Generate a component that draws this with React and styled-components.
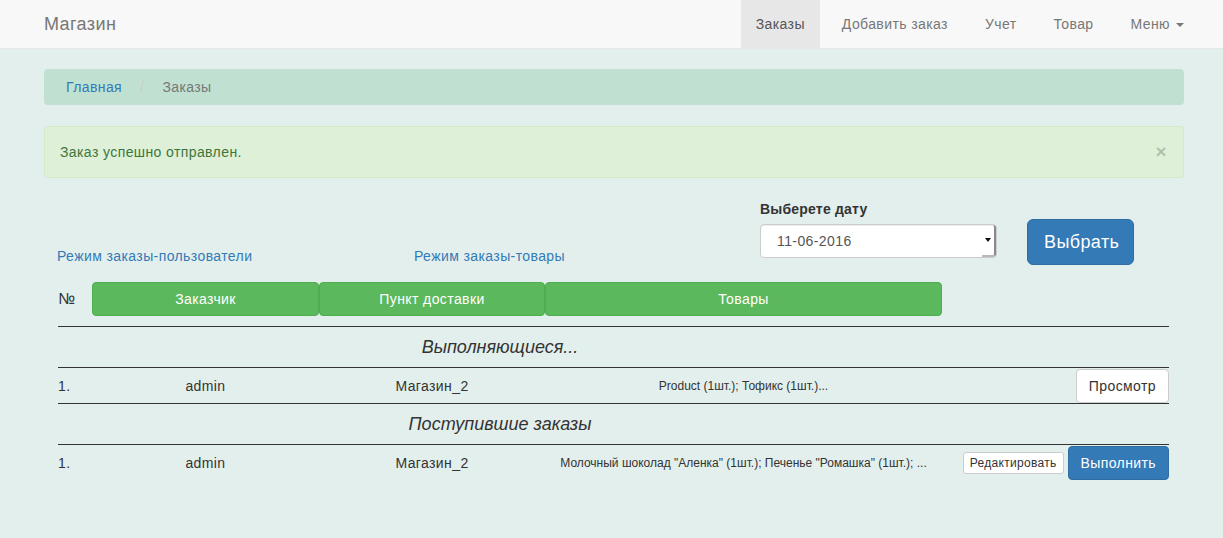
import React from "react";
import styled, { createGlobalStyle, css } from "styled-components";

const GlobalStyle = createGlobalStyle`
  html, body {
    margin: 0;
    padding: 0;
    background: #e3efec;
  }
  body {
    font-family: "Liberation Sans", Arial, Helvetica, sans-serif;
    font-size: 14px;
    line-height: 20px;
    letter-spacing: 0.4px;
    color: #333;
  }
  * { box-sizing: border-box; }
`;

const Navbar = styled.nav`
  height: 49px;
  background: #f8f8f8;
  border-bottom: 1px solid #e7e7e7;
`;

const NavInner = styled.div`
  width: 1140px;
  margin: 0 44px;
  display: flex;
  justify-content: space-between;
  align-items: stretch;
  height: 48px;
`;

const Brand = styled.a`
  font-size: 18px;
  line-height: 48px;
  color: #777;
  text-decoration: none;
`;

const NavList = styled.ul`
  list-style: none;
  display: flex;
  gap: 7px;
  margin: 0 -15px 0 0;
  padding: 0;
`;

const NavItem = styled.li`
  padding: 0 15px;
  line-height: 48px;
  height: 48px;
  color: #777;
  display: flex;
  align-items: center;
  ${(p) =>
    p.$active &&
    css`
      background: #e7e7e7;
      color: #555;
    `}
`;

const Caret = styled.span`
  display: inline-block;
  width: 0;
  height: 0;
  margin-left: 6px;
  margin-top: 2px;
  border-top: 4px solid #777;
  border-left: 4px solid transparent;
  border-right: 4px solid transparent;
`;

const Container = styled.main`
  width: 1140px;
  margin: 20px 44px 0;
`;

const Breadcrumb = styled.ol`
  list-style: none;
  margin: 0 0 21px;
  padding: 8px 22px;
  height: 36px;
  background: #c0e1d1;
  border-radius: 4px;
  display: flex;
  align-items: center;
`;

const Crumb = styled.li`
  color: ${(p) => (p.$current ? "#777" : "#337ab7")};
`;

const Sep = styled.li`
  color: #ccc;
  padding: 0 18px 0 18px;
`;

const Alert = styled.div`
  position: relative;
  height: 52px;
  padding: 15px 35px 15px 15px;
  background: #dff0d8;
  border: 1px solid #d6e9c6;
  border-radius: 4px;
  color: #3c763d;
  margin-bottom: 20px;
`;

const Close = styled.span`
  position: absolute;
  right: 16px;
  top: 14px;
  font-size: 19px;
  font-weight: bold;
  line-height: 21px;
  color: #000;
  opacity: 0.2;
`;

const Panel = styled.section`
  padding: 0 15px 0 14px;
`;

const Controls = styled.div`
  display: grid;
  grid-template-columns: 357px 346px 267px auto;
  align-items: start;
  margin-left: -1px;
  height: 67px;
`;

const ModeLink = styled.a`
  margin-top: 48px;
  color: #337ab7;
  text-decoration: none;
  white-space: nowrap;
`;

const DateGroup = styled.div`
  padding-top: 1px;
  display: flex;
  flex-direction: column;
`;

const Label = styled.label`
  font-weight: bold;
  letter-spacing: 0.2px;
  margin-bottom: 5px;
`;

const FakeSelect = styled.div`
  position: relative;
  width: 237px;
  height: 34px;
  background: #fff;
  border: 1px solid #ccc;
  border-radius: 4px;
  padding: 6px 16px;
  color: #555;
  box-shadow: inset 0 1px 1px rgba(0, 0, 0, 0.075);
`;

const SelectButton = styled.span`
  position: absolute;
  right: 0;
  top: 0;
  bottom: 0;
  width: 14px;
  border-right: 2px solid #8a8a8a;
  border-bottom: 2px solid #b8b8b8;
  border-radius: 0 3px 3px 0;
  display: flex;
  align-items: center;
  justify-content: center;
  &::after {
    content: "";
    border-top: 4px solid #111;
    border-left: 3px solid transparent;
    border-right: 3px solid transparent;
  }
`;

const Button = styled.button`
  font-family: inherit;
  font-size: 14px;
  line-height: 20px;
  letter-spacing: 0.4px;
  padding: 6px 12px;
  border-radius: 4px;
  border: 1px solid #ccc;
  background: #fff;
  color: #333;
  cursor: pointer;
  white-space: nowrap;
  ${(p) =>
    p.$primary &&
    css`
      background: #337ab7;
      border-color: #2e6da4;
      color: #fff;
    `}
  ${(p) =>
    p.$large &&
    css`
      font-size: 18px;
      line-height: 24px;
      padding: 10px 16px;
      border-radius: 6px;
      height: 46px;
      width: 107px;
    `}
  ${(p) =>
    p.$xs &&
    css`
      font-size: 12px;
      line-height: 18px;
      letter-spacing: 0.3px;
      padding: 1px 6px;
      border-radius: 3px;
    `}
`;

const SelectBtnWrap = styled.div`
  margin-top: 21px;
`;

const Grid = css`
  display: grid;
  grid-template-columns: 34px 227px 226px 397px 1fr;
  align-items: center;
`;

const HeaderRow = styled.div`
  ${Grid};
  height: 34px;
  margin-top: 17px;
  margin-bottom: 10px;
`;

const NumHead = styled.span`
  font-size: 16px;
  letter-spacing: 0;
`;

const ColButton = styled.div`
  height: 34px;
  background: #5cb85c;
  border: 1px solid #4cae4c;
  border-radius: 4px;
  color: #fff;
  text-align: center;
  line-height: 32px;
`;

const SectionTitle = styled.div`
  border-top: 1px solid #333;
  height: 41px;
  display: grid;
  grid-template-columns: 884px 1fr;
  align-items: center;
  & > span {
    text-align: center;
    font-size: 18px;
    font-style: italic;
    letter-spacing: 0;
  }
`;

const OrderRow = styled.div`
  ${Grid};
  border-top: 1px solid #333;
  height: 36px;
`;

const Cell = styled.span`
  text-align: ${(p) => (p.$center ? "center" : "left")};
  font-size: ${(p) => (p.$small ? "12px" : "14px")};
  letter-spacing: ${(p) => (p.$small ? "0" : "0.4px")};
  white-space: nowrap;
`;

const Actions = styled.div`
  display: flex;
  justify-content: flex-end;
  align-items: center;
  gap: 4px;
`;

export default function App() {
  return (
    <>
      <GlobalStyle />
      <Navbar>
        <NavInner>
          <Brand>Магазин</Brand>
          <NavList>
            <NavItem $active>Заказы</NavItem>
            <NavItem>Добавить заказ</NavItem>
            <NavItem>Учет</NavItem>
            <NavItem>Товар</NavItem>
            <NavItem>
              Меню <Caret />
            </NavItem>
          </NavList>
        </NavInner>
      </Navbar>
      <Container>
        <Breadcrumb>
          <Crumb>Главная</Crumb>
          <Sep>/</Sep>
          <Crumb $current>Заказы</Crumb>
        </Breadcrumb>
        <Alert>
          Заказ успешно отправлен.
          <Close>×</Close>
        </Alert>
        <Panel>
          <Controls>
            <ModeLink>Режим заказы-пользователи</ModeLink>
            <ModeLink>Режим заказы-товары</ModeLink>
            <DateGroup>
              <Label>Выберете дату</Label>
              <FakeSelect>
                11-06-2016
                <SelectButton />
              </FakeSelect>
            </DateGroup>
            <SelectBtnWrap>
              <Button $primary $large>
                Выбрать
              </Button>
            </SelectBtnWrap>
          </Controls>
          <HeaderRow>
            <NumHead>№</NumHead>
            <ColButton>Заказчик</ColButton>
            <ColButton>Пункт доставки</ColButton>
            <ColButton>Товары</ColButton>
          </HeaderRow>
          <SectionTitle>
            <span>Выполняющиеся...</span>
          </SectionTitle>
          <OrderRow>
            <Cell>1.</Cell>
            <Cell $center>admin</Cell>
            <Cell $center>Магазин_2</Cell>
            <Cell $center $small>
              Product (1шт.); Тофикс (1шт.)...
            </Cell>
            <Actions>
              <Button>Просмотр</Button>
            </Actions>
          </OrderRow>
          <SectionTitle>
            <span>Поступившие заказы</span>
          </SectionTitle>
          <OrderRow>
            <Cell>1.</Cell>
            <Cell $center>admin</Cell>
            <Cell $center>Магазин_2</Cell>
            <Cell $center $small>
              Молочный шоколад "Аленка" (1шт.); Печенье "Ромашка" (1шт.); ...
            </Cell>
            <Actions>
              <Button $xs>Редактировать</Button>
              <Button $primary>Выполнить</Button>
            </Actions>
          </OrderRow>
        </Panel>
      </Container>
    </>
  );
}
